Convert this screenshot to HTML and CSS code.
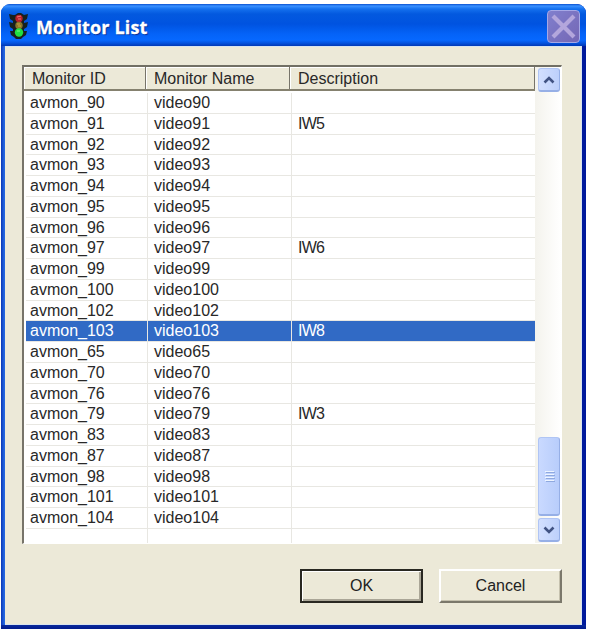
FILE: index.html
```html
<!DOCTYPE html>
<html lang="en">
<head>
<meta charset="utf-8">
<title>Monitor List</title>
<link rel="stylesheet" href="styles.css">
</head>
<body>
<main class="window">
  <header class="titlebar">
    <svg class="app-icon" width="20" height="26" viewBox="0 0 20 26" aria-hidden="true">
      <path d="M6 2l3-2h3l3 2 4-1-1 5-3 2v2l4-1-1 5-3 2v2l3 0-1 4-3 2-2 2H7l-2-2-3-2-1-4h3v-2l-3-2-1-5 4 1V8L1 6 0 1l4 1z" fill="#17201d"/>
      <circle cx="10" cy="5.5" r="3.7" fill="#b7202b"/>
      <path d="M8 4l4-1M9 6h3" stroke="#ee7771"/>
      <circle cx="10" cy="12.5" r="3.7" fill="#8a7427"/>
      <path d="M8 11h3M9 13h3" stroke="#c6a843"/>
      <circle cx="10" cy="19.5" r="4.2" fill="#20df42"/>
      <path d="M8 18h3" stroke="#75ff78"/>
    </svg>
    <h1 class="title">Monitor List</h1>
    <button class="close" aria-label="Close">
      <svg width="33" height="33" viewBox="0 0 33 33"><path d="M6 6L27 27M27 6L6 27" stroke="#b3a6dc" stroke-width="4.2"/></svg>
    </button>
  </header>
  <section class="client">
    <div class="list">
      <div class="table">
        <div class="head"><span>Monitor ID</span><span>Monitor Name</span><span>Description</span></div>
        <div class="rows">
          <div class="row"><span>avmon_90</span><span>video90</span><span></span></div>
          <div class="row"><span>avmon_91</span><span>video91</span><span class="iw">IW5</span></div>
          <div class="row"><span>avmon_92</span><span>video92</span><span></span></div>
          <div class="row"><span>avmon_93</span><span>video93</span><span></span></div>
          <div class="row"><span>avmon_94</span><span>video94</span><span></span></div>
          <div class="row"><span>avmon_95</span><span>video95</span><span></span></div>
          <div class="row"><span>avmon_96</span><span>video96</span><span></span></div>
          <div class="row"><span>avmon_97</span><span>video97</span><span class="iw">IW6</span></div>
          <div class="row"><span>avmon_99</span><span>video99</span><span></span></div>
          <div class="row"><span>avmon_100</span><span>video100</span><span></span></div>
          <div class="row"><span>avmon_102</span><span>video102</span><span></span></div>
          <div class="row selected"><span>avmon_103</span><span>video103</span><span class="iw">IW8</span></div>
          <div class="row"><span>avmon_65</span><span>video65</span><span></span></div>
          <div class="row"><span>avmon_70</span><span>video70</span><span></span></div>
          <div class="row"><span>avmon_76</span><span>video76</span><span></span></div>
          <div class="row"><span>avmon_79</span><span>video79</span><span class="iw">IW3</span></div>
          <div class="row"><span>avmon_83</span><span>video83</span><span></span></div>
          <div class="row"><span>avmon_87</span><span>video87</span><span></span></div>
          <div class="row"><span>avmon_98</span><span>video98</span><span></span></div>
          <div class="row"><span>avmon_101</span><span>video101</span><span></span></div>
          <div class="row"><span>avmon_104</span><span>video104</span><span></span></div>
          <div class="row last"><span></span><span></span><span></span></div>
        </div>
      </div>
      <div class="scrollbar">
        <div class="arrow"><svg width="12" height="8" viewBox="0 0 12 8"><path d="M1.500 6.500L6 2l4.500 4.500" fill="none" stroke="#415383" stroke-width="2.600"/></svg></div>
        <div class="track"></div>
        <div class="thumb"><i></i><i></i><i></i><i></i></div>
        <div class="arrow"><svg width="12" height="8" viewBox="0 0 12 8"><path d="M1.500 1.500L6 6l4.500-4.500" fill="none" stroke="#415383" stroke-width="2.600"/></svg></div>
      </div>
    </div>
    <footer class="actions">
      <button class="button default">OK</button>
      <button class="button">Cancel</button>
    </footer>
  </section>
</main>
</body>
</html>
```
FILE: styles.css
```css
* { box-sizing: border-box; }
body {
  margin: 0;
  padding: 4px 0 0 1px;
  background: #fff;
  font: 16px/20px "Liberation Sans", Arial, sans-serif;
  color: #282828;
}
.window {
  width: 585px;
  height: 625px;
  display: flex;
  flex-direction: column;
  border-radius: 9px 9px 0 0;
  background:
    linear-gradient(#0a2a9c, #001a8c) 0 100% / 100% 4px no-repeat,
    linear-gradient(90deg, #0a36b5 0, #2465e0 3px, #0842cf 50%, #001a9c 100%);
  overflow: hidden;
}
.titlebar {
  height: 42px;
  flex: none;
  display: flex;
  align-items: center;
  padding: 0 6px 0 8px;
  background: linear-gradient(#0a50cf 0, #3a91ff 2px, #1470ee 5px, #0359df 10px, #0053e0 20px, #0463f8 30px, #0668ff 36px, #0453df 39px, #0038b5 42px);
}
.app-icon { margin-top: 1px; }
.title {
  flex: 1;
  margin: 4px 0 0 7px;
  font: bold 18px/24px "Open Sans", sans-serif;
  letter-spacing: .15px;
  color: #fff;
  -webkit-text-stroke: .3px #fff;
  text-shadow: 1px 1px 1px #082d91;
}
.close {
  width: 33px;
  height: 33px;
  margin-top: 2px;
  padding: 0;
  border: 1px solid #a6a8e6;
  border-radius: 4px;
  background: linear-gradient(135deg, #817fcd, #7467b5);
}
.close svg { display: block; margin: -1px; }
.client {
  flex: 1;
  margin: 0 4px 4px;
  padding: 18px 19px 0 17px;
  background: #ece9d8;
  border: 1px solid #d8e4ee;
  border-width: 1px 1px 1px 0;
}
.list {
  height: 479px;
  display: flex;
  background: #fff;
  border: 2px solid #77746a;
  border-top-color: #716f64;
  border-right: 1px solid #fff;
  border-bottom: 1px solid #fff;
}
.table { width: 511px; overflow: hidden; }
.head, .row { display: grid; grid-template-columns: 122px 144px 1fr; }
.head { height: 24px; margin-bottom: 2px; background: #ece9d8; border-bottom: 2px solid #85816f; }
.head span { padding: 2px 0 0 8px; border-right: 1px solid #77746a; box-shadow: inset 1px 1px #fff; }
.rows { padding-left: 2px; }
.row { height: 20.75px; border-bottom: 1px solid #e8e7e2; }
.row span { padding-left: 4px; border-right: 1px solid #e8e7e2; }
.row span:nth-child(2) { padding-left: 6px; }
.row span:nth-child(3) { padding-left: 6px; border: 0; }
.row .iw { letter-spacing: -.8px; }
.selected { color: #fff; background: #316ac5; }
.last { border-bottom: 0; }
.scrollbar {
  flex: 1;
  display: flex;
  flex-direction: column;
  padding: 1px 0 1px 3px;
  background: linear-gradient(90deg, #f4f3ed, #fff);
}
.arrow, .thumb {
  flex: none;
  width: 22px;
  display: flex;
  align-items: center;
  justify-content: center;
  border: 1px solid #b0c5f4;
  border-right-color: #96afe6;
  border-bottom: 2px solid #96afe6;
  border-radius: 3px;
  background: linear-gradient(90deg, #d2dfff, #bdd0fb);
}
.arrow { height: 24px; }
.track { flex: 1; }
.thumb { height: 79px; margin-bottom: 2px; flex-direction: column; gap: 2px; background: linear-gradient(90deg, #c9d9ff, #b8cdfb); }
.thumb i { width: 9px; height: 1px; background: #edf4ff; box-shadow: 1px 1px #8fa9df; }
.actions { display: flex; justify-content: flex-end; gap: 16px; margin-top: 25px; }
.button {
  width: 123px;
  height: 34px;
  padding: 0 0 1px;
  font: inherit;
  color: #222;
  background: #ece9d8;
  border: 2px solid;
  border-color: #fff #7b786b #7b786b #fff;
  box-shadow: inset -1px -1px #c5c1ae;
}
.default { border-color: #292821; box-shadow: inset 1px 1px #fff, inset -2px -2px #aaa697; }
```
